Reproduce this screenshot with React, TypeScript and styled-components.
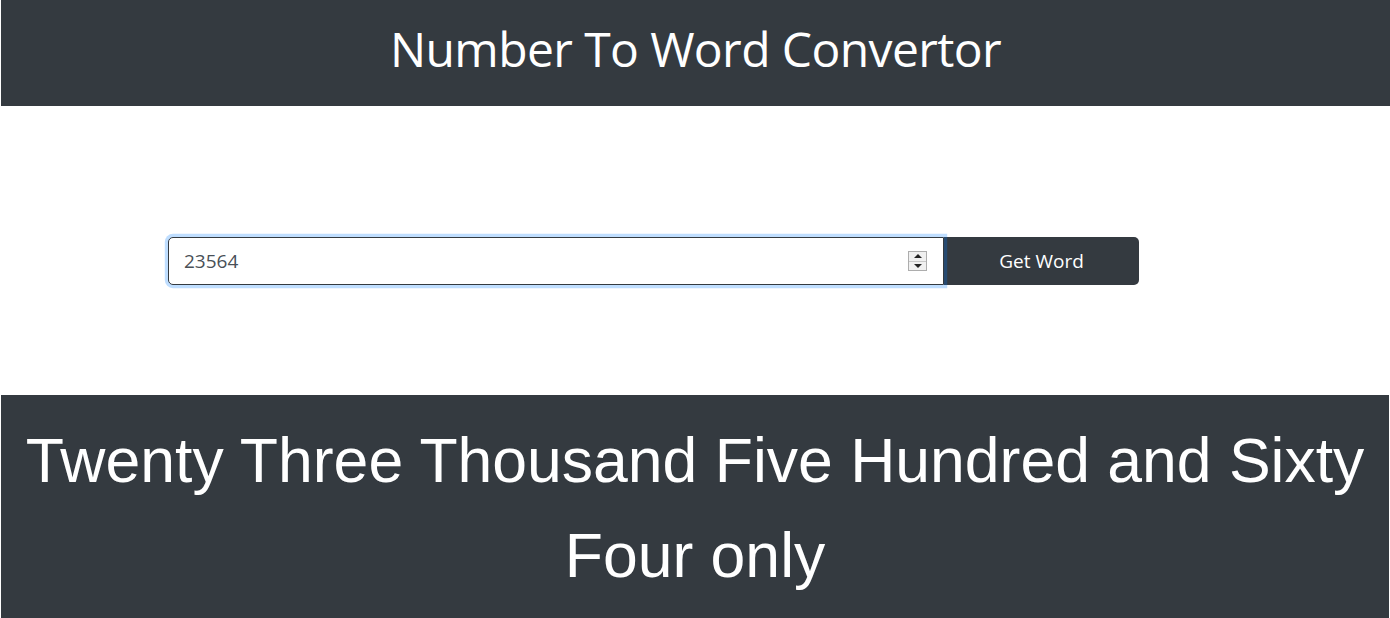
import React, { useState } from "react";
import styled, { createGlobalStyle } from "styled-components";

const GlobalStyle = createGlobalStyle`
  html, body {
    margin: 0;
    padding: 0;
    background: #fff;
    overflow: hidden;
  }
  body {
    font-family: "Open Sans", "Noto Sans", sans-serif;
  }
  * { box-sizing: border-box; }
`;

const Page = styled.div`
  display: flex;
  flex-direction: column;
  min-height: 618px;
  padding-left: 1px;
`;

const Header = styled.header`
  background: #343a40;
  color: #fff;
  height: 106px;
  padding-top: 20px;
  text-align: center;
`;

const Title = styled.h1`
  margin: 0;
  font-family: "Open Sans", "Noto Sans", sans-serif;
  font-weight: 400;
  font-size: 48px;
  line-height: 1.2;
  letter-spacing: -0.6px;
`;

const FormRow = styled.form`
  display: flex;
  width: 971px;
  margin: 131px 0 110px 167px;
`;

const FieldWrap = styled.div`
  position: relative;
  flex: 1;
  display: flex;
`;

const NumberField = styled.input`
  flex: 1;
  height: 48px;
  padding: 8px 15px;
  font-family: "Open Sans", "Noto Sans", sans-serif;
  font-size: 19px;
  color: #495057;
  background: #fff;
  border: 1px solid #343a40;
  border-radius: 5px 0 0 5px;
  outline: none;
  box-shadow: 0 0 0 3.2px rgba(0, 123, 255, 0.25);
  caret-color: #495057;
`;

const Spinner = styled.div`
  position: absolute;
  right: 17px;
  top: 14px;
  width: 19px;
  height: 20px;
  display: flex;
  flex-direction: column;
  border: 1px solid #adadad;
  background: #f0f0f0;
`;

const SpinHalf = styled.div<{ $down?: boolean }>`
  flex: 1;
  display: flex;
  align-items: center;
  justify-content: center;
  border-top: ${(p) => (p.$down ? "1px solid #c8c8c8" : "none")};

  &::after {
    content: "";
    width: 0;
    height: 0;
    border-left: 4px solid transparent;
    border-right: 4px solid transparent;
    ${(p) =>
      p.$down ? "border-top: 4px solid #222;" : "border-bottom: 4px solid #222;"}
  }
`;

const SubmitButton = styled.button`
  width: 195px;
  height: 48px;
  border: none;
  border-radius: 0 5px 5px 0;
  background: #343a40;
  color: #fff;
  font-family: "Open Sans", "Noto Sans", sans-serif;
  font-size: 19px;
  cursor: pointer;
`;

const Result = styled.section`
  flex: 1;
  background: #343a40;
  color: #fff;
  padding-top: 18px;
  margin-right: 1px;
  text-align: center;
`;

const ResultText = styled.h1`
  margin: 0;
  font-family: "Liberation Sans", Arial, sans-serif;
  font-weight: 400;
  font-size: 62.5px;
  line-height: 95px;
`;

export default function App() {
  const [value, setValue] = useState("23564");

  return (
    <Page>
      <GlobalStyle />
      <Header>
        <Title>Number To Word Convertor</Title>
      </Header>
      <FormRow onSubmit={(e) => e.preventDefault()}>
        <FieldWrap>
          <NumberField
            type="text"
            inputMode="numeric"
            value={value}
            autoFocus
            onChange={(e) => setValue(e.target.value)}
          />
          <Spinner>
            <SpinHalf />
            <SpinHalf $down />
          </Spinner>
        </FieldWrap>
        <SubmitButton type="submit">Get Word</SubmitButton>
      </FormRow>
      <Result>
        <ResultText>Twenty Three Thousand Five Hundred and Sixty Four only</ResultText>
      </Result>
    </Page>
  );
}
